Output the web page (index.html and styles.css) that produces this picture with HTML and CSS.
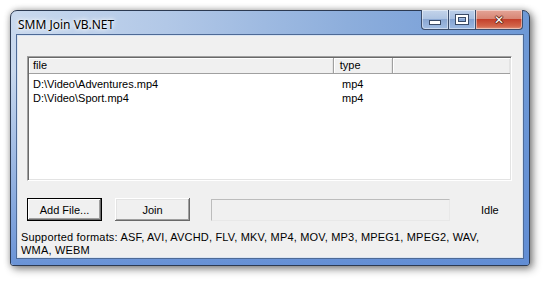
FILE: index.html
```html
<!DOCTYPE html>
<html>
<head>
<meta charset="utf-8">
<link rel="stylesheet" href="styles.css">
</head>
<body>
<div class="window">
  <div class="titlebar">
    <span class="title">SMM Join VB.NET</span>
    <div class="caption-buttons">
      <div class="cbtn min"><span class="min-glyph"></span></div>
      <div class="cbtn max"><span class="max-glyph"></span></div>
      <div class="cbtn close"><span class="close-glyph">✕</span></div>
    </div>
  </div>
  <div class="client">
    <div class="listview">
      <div class="lv-header">
        <div class="hcol c1">file</div>
        <div class="hcol c2">type</div>
        <div class="hcol c3"></div>
      </div>
      <div class="lv-row"><span class="c1">D:\Video\Adventures.mp4</span><span class="c2">mp4</span></div>
      <div class="lv-row"><span class="c1">D:\Video\Sport.mp4</span><span class="c2">mp4</span></div>
    </div>
    <div class="controls">
      <button class="btn default">Add File...</button>
      <button class="btn">Join</button>
      <div class="progress"></div>
      <span class="status">Idle</span>
    </div>
    <p class="formats">Supported formats: ASF, AVI, AVCHD, FLV, MKV, MP4, MOV, MP3, MPEG1, MPEG2, WAV,<br>WMA, WEBM</p>
  </div>
</div>
</body>
</html>
```

FILE: styles.css
```css
html, body {
  margin: 0;
  padding: 0;
  background: #ffffff;
}
body {
  padding: 10px 0 0 10px;
  width: 549px;
  height: 281px;
  box-sizing: border-box;
  overflow: hidden;
}
.window {
  width: 520px;
  height: 256px;
  box-sizing: border-box;
  border: 1px solid #2c3a52;
  border-radius: 7px 7px 3px 3px;
  background: linear-gradient(90deg, #c9d9ee 0%, #b2c8e7 30%, #8daedc 65%, #6d98d6 100%);
  box-shadow: 3px 3px 9px rgba(0,0,0,0.45), 0 0 6px rgba(0,0,0,0.25);
  display: flex;
  flex-direction: column;
  position: relative;
}
.window::before {
  content: "";
  position: absolute;
  left: 0; right: 0; top: 60px; bottom: 0;
  border-radius: 0 0 3px 3px;
  background: linear-gradient(180deg, rgba(110,150,214,0) 0%, rgba(96,140,212,0.9) 100%);
  pointer-events: none;
}
.titlebar {
  height: 26px;
  display: flex;
  justify-content: space-between;
  align-items: flex-start;
  padding: 0 6px 0 7px;
  position: relative;
  z-index: 1;
}
.title {
  font-family: "Noto Sans", "Open Sans", sans-serif;
  font-size: 12px;
  color: #000;
  margin-top: 5px;
  text-shadow: 0 0 6px #fff, 0 0 4px #fff, 0 0 2px rgba(255,255,255,0.8);
}
.caption-buttons {
  display: flex;
  margin-top: -1px;
}
.cbtn {
  height: 19px;
  border: 1px solid #3b4d6b;
  border-top: none;
  display: flex;
  align-items: center;
  justify-content: center;
  box-shadow: inset 0 0 0 1px rgba(255,255,255,0.45);
}
.min {
  width: 26px;
  border-radius: 0 0 0 4px;
  border-right: none;
  background: linear-gradient(180deg, #c4d4ea 0%, #aec4e2 45%, #8aa7d2 50%, #a1bde3 100%);
}
.max {
  width: 26px;
  border-right: none;
  background: linear-gradient(180deg, #bccfe9 0%, #a7bfe2 45%, #84a3d2 50%, #9cb9e3 100%);
}
.close {
  width: 46px;
  border-radius: 0 0 4px 0;
  background: linear-gradient(180deg, #e4a497 0%, #d88675 45%, #c4412c 50%, #d2654a 85%, #e1917a 100%);
}
.min-glyph {
  width: 10px;
  height: 3px;
  background: #fff;
  border: 1px solid #394a66;
  margin-top: 5px;
}
.max-glyph {
  width: 8px;
  height: 5px;
  border: 2px solid #fff;
  outline: 1px solid #394a66;
  box-shadow: inset 0 0 0 1px #394a66;
}
.close-glyph {
  font-family: "DejaVu Sans", sans-serif;
  font-weight: bold;
  font-size: 12px;
  color: #fff;
  line-height: 1;
  text-shadow: 0 0 1px #5a1c10, 1px 0 0 #6a2a1a, -1px 0 0 #6a2a1a, 0 1px 0 #6a2a1a, 0 -1px 0 #6a2a1a;
}
.client {
  flex: 1;
  margin: 0 6px 7px 6px;
  background: #f0f0f0;
  border: 1px solid #dbe5f2;
  box-shadow: 0 0 0 1px #4e6a96;
  position: relative;
  z-index: 1;
  font-family: "Liberation Sans", Arial, sans-serif;
  font-size: 11px;
  color: #000;
  display: flex;
  flex-direction: column;
  padding: 20px 10px 0 3px;
}
.listview {
  margin-left: 6px;
  width: 485px;
  height: 125px;
  box-sizing: border-box;
  background: #fff;
  border-top: 1px solid #a0a0a0;
  border-left: 1px solid #a0a0a0;
  border-right: 1px solid #fff;
  border-bottom: 1px solid #fff;
  box-shadow: inset 1px 1px 0 #696969, inset -1px -1px 0 #e3e3e3;
  padding: 1px 1px 0 1px;
}
.lv-header {
  display: flex;
  height: 15px;
  background: #f0f0f0;
  box-shadow: 0 1px 0 #a0a0a0;
  margin-bottom: 4px;
}
.hcol {
  box-sizing: border-box;
  height: 15px;
  line-height: 14px;
  padding-left: 4px;
  border-right: 1px solid #a0a0a0;
  box-shadow: inset 1px 1px 0 #fff, inset -1px 0 0 #e3e3e3;
}
.hcol.c1 { width: 306px; }
.hcol.c2 { width: 60px; padding-left: 6px; }
.hcol.c3 { width: 117px; border-right: none; }
.lv-row {
  display: flex;
  height: 14px;
  line-height: 14px;
}
.lv-row .c1 { width: 306px; padding-left: 4px; box-sizing: border-box; }
.lv-row .c2 { width: 60px; padding-left: 7px; box-sizing: border-box; }
.controls {
  display: flex;
  align-items: center;
  margin-top: 17px;
  height: 23px;
  margin-left: 6px;
}
.btn {
  font-family: "Liberation Sans", Arial, sans-serif;
  font-size: 11px;
  color: #000;
  width: 75px;
  height: 23px;
  padding: 0;
  background: #f0f0f0;
  border: none;
  box-shadow: inset -1px -1px 0 #696969, inset 1px 1px 0 #fff, inset -2px -2px 0 #a0a0a0, inset 2px 2px 0 #e3e3e3;
}
.btn.default {
  border: 1px solid #000;
  box-shadow: inset -1px -1px 0 #696969, inset 1px 1px 0 #fff, inset -2px -2px 0 #a0a0a0;
}
.btn + .btn { margin-left: 13px; }
.progress {
  margin-left: 21px;
  width: 239px;
  height: 22px;
  box-sizing: border-box;
  border: 1px solid #bcbcbc;
  border-right-color: #e8e8e8;
  border-bottom-color: #e8e8e8;
  background: #f0f0f0;
}
.status {
  margin-left: 31px;
}
.formats {
  margin: 10px 0 0 0;
  line-height: 13px;
  letter-spacing: 0.18px;
}
```
